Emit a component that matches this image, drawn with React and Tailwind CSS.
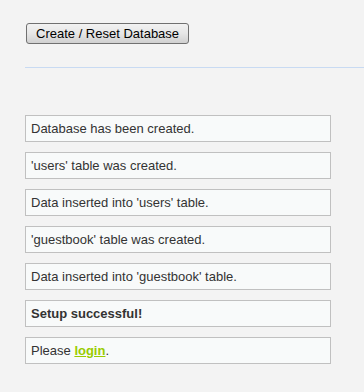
import React from 'react'

const messages = [
    "Database has been created.",
    "'users' table was created.",
    "Data inserted into 'users' table.",
    "'guestbook' table was created.",
    "Data inserted into 'guestbook' table.",
]

const Box = ({ children, bold }) => (
    <div className={`h-[27px] w-[306px] flex items-center px-[5px] border border-[#c0c0c0] bg-[#f8fafa] text-[13px] text-[#333] ${bold ? 'font-bold' : ''}`}>
        {children}
    </div>
)

const App = () => {
    return (
        <div className="min-h-screen bg-[#f3f3f3] pl-[25px] pt-[23px] font-['Liberation_Sans',Arial,sans-serif]">
            <button className="block ml-[1px] h-[21px] px-[9px] rounded-[3px] border border-[#707070] bg-gradient-to-b from-[#f2f2f2] via-[#e6e6e6] to-[#d0d0d0] text-[13px] text-black leading-none">
                Create / Reset Database
            </button>

            <div className="mt-[23px] border-t border-[#c8daf2]"></div>

            <div className="mt-[47px] flex flex-col gap-[10px]">
                {messages.map((m) => (
                    <Box key={m}>{m}</Box>
                ))}
                <Box bold>Setup successful!</Box>
                <Box>
                    Please&nbsp;<a href="#" className="font-bold text-[#99cc00] underline">login</a>.
                </Box>
            </div>
        </div>
    )
}

export default App
